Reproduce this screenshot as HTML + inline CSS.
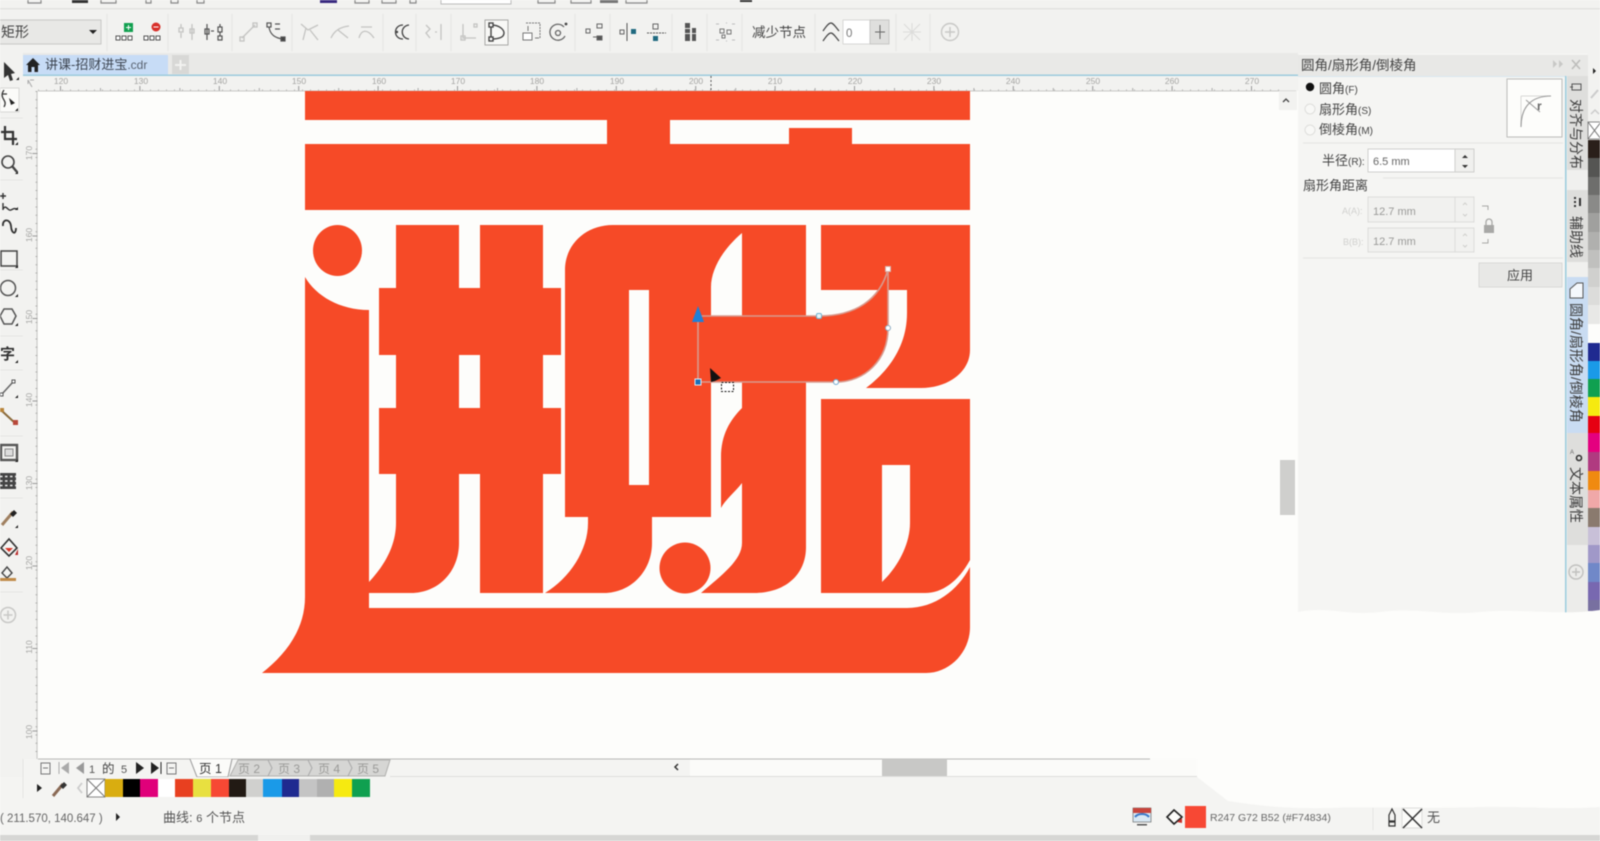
<!DOCTYPE html>
<html lang="zh">
<head>
<meta charset="utf-8">
<title>讲课-招财进宝.cdr</title>
<style>
html,body{margin:0;padding:0;width:1600px;height:841px;overflow:hidden;background:#fdfdfb}
svg{display:block;position:absolute;left:0;top:0;filter:blur(.5px)}
text{font-family:"Liberation Sans","Noto Sans CJK SC",sans-serif}
.ic{fill:none;stroke:#555;stroke-width:1.2}
.gr{fill:none;stroke:#c4c4c2;stroke-width:1.3}
.rl{font-size:8.5px;fill:#a4a4a2;text-anchor:middle}
</style>
</head>
<body>
<svg width="1600" height="841" viewBox="0 0 1600 841" xmlns="http://www.w3.org/2000/svg">
<!-- base -->
<rect width="1600" height="841" fill="#fdfdfb"/>
<!-- top toolbar row -->
<rect width="1600" height="53" fill="#f2f2f0"/>
<rect y="8" width="1600" height="1.5" fill="#e2e2e0"/>
<g fill="none" stroke="#888" stroke-width="1.2">
<path d="M28,0V3H41V0M101,0V3H116V0M146,0V3H151V0M171,0V3H178V0M197,0V3H204V0M355,0V3H369V0M382,0V3H396V0M410,0V3H416V0M538,0V3H555V0M571,0V3H591V0M626,0V3H647V0"/>
</g>
<rect x="72" y="0" width="16" height="3" fill="#333"/>
<rect x="320" y="0" width="17" height="3" fill="#3a2a80"/>
<rect x="600" y="0" width="18" height="3" fill="#777"/>
<rect x="740" y="0" width="12" height="2" fill="#333"/>
<rect x="441" y="-1" width="70" height="5" fill="#fff" stroke="#bbb"/>
<!-- property bar separators -->
<g stroke="#e6e6e4" stroke-width="1.2">
<path d="M107,14V51M168,14V51M232,14V51M292,14V51M383,14V51M416,14V51M451,14V51M575,14V51M610,14V51M672,14V51M707,14V51M742,14V51M815,14V51M896,14V51M930,14V51"/>
</g>
<!-- dropdown -->
<rect x="-2" y="20" width="103" height="24" fill="#e8e8e6" stroke="#c8c8c6"/>
<text x="1" y="37" font-size="14" fill="#444">矩形</text>
<path d="M89,30h8l-4,4z" fill="#222"/>
<!-- add / delete nodes -->
<rect x="124" y="23" width="9" height="9" fill="#12a050"/><path d="M126,27.5h5M128.5,25v5" stroke="#fff"/>
<circle cx="156" cy="27" r="4.5" fill="#d8302a"/><path d="M153.5,27h5" stroke="#fff"/>
<g fill="#fff" stroke="#555" stroke-width="1"><rect x="116" y="36" width="4" height="4"/><rect x="122" y="36" width="4" height="4"/><rect x="128" y="36" width="4" height="4"/><rect x="144" y="36" width="4" height="4"/><rect x="150" y="36" width="4" height="4"/><rect x="156" y="36" width="4" height="4"/></g>
<!-- gray and dark node icons -->
<g class="gr"><path d="M181,24v4M181,33v5M192,24v16"/><rect x="179" y="28" width="4" height="4"/><rect x="190" y="29" width="4" height="4"/></g>
<g class="ic"><path d="M207,24v16M220,24v3M220,32v4"/><rect x="205" y="29" width="4" height="5"/><rect x="218" y="27" width="4" height="5"/><rect x="218" y="36" width="4" height="4"/><path d="M211,31h3"/></g>
<g class="gr"><path d="M242,38L255,25"/><rect x="240" y="37" width="4" height="4"/><rect x="253" y="23" width="4" height="4"/></g>
<g class="ic"><path d="M269,27C270,34 274,38 283,39M275,24h5M275,29h5"/><rect x="267" y="23" width="4" height="4"/><rect x="281" y="37" width="4" height="4" fill="#444"/></g>
<g class="gr" stroke-width="1.500"><path d="M301,24L308,30L318,25M306,28L303,40M310,30L318,40M331,38C334,31 340,27 349,26M338,30L348,38M359,38C361,30 367,28 374,38M361,27L372,27"/></g>
<g fill="none" stroke="#444" stroke-width="1.300"><path d="M403,25C393,25 393,39 403,39M409,25C400,26 400,38 409,39"/></g><circle cx="397" cy="32" r="1.200" fill="#444"/>
<g class="gr"><path d="M426,25l4,4l-4,4l4,5M441,24v16M435,32h2"/></g>
<g class="gr"><path d="M463,24v14h13"/><rect x="461" y="36" width="4" height="4"/><rect x="474" y="24" width="3" height="3"/></g>
<rect x="485" y="20" width="23" height="25" fill="#f8f8f6" stroke="#a8a8a6"/>
<g fill="none" stroke="#444" stroke-width="1.400"><path d="M491,25C500,25 504,30 504,33C504,37 499,39 491,39V25Z"/><rect x="489" y="23" width="4" height="4" fill="#fff"/><rect x="489" y="37" width="4" height="4" fill="#fff"/></g>
<!-- second half icons -->
<g fill="none" stroke="#777" stroke-width="1"><path d="M526,23h14v16" stroke-dasharray="2 1"/><path d="M528,26v5"/><rect x="523" y="33" width="9" height="7" fill="#fff"/><path d="M535,38h4"/></g>
<g fill="none" stroke="#666" stroke-width="1.300"><path d="M564,27A8,8 0 1,0 565,36"/><circle cx="558" cy="33" r="2.500"/></g><circle cx="566" cy="24" r="1.400" fill="#444"/>
<g fill="none" stroke="#666" stroke-width="1"><rect x="586" y="29" width="4" height="4"/><rect x="597" y="24" width="5" height="4"/><rect x="597" y="36" width="5" height="4" fill="#555"/><path d="M593,37h4"/></g>
<g><path d="M627,23V41" stroke="#555"/><rect x="620" y="30" width="4" height="4" fill="none" stroke="#666"/><rect x="631" y="29" width="5" height="5" fill="#206a80"/><path d="M647,33H666" stroke="#555" stroke-dasharray="2 1"/><rect x="653" y="24" width="5" height="5" fill="none" stroke="#666"/><rect x="653" y="36" width="5" height="5" fill="#206a80"/></g>
<g fill="#555"><rect x="685" y="23" width="5" height="18"/><rect x="692" y="28" width="4" height="13"/></g><g fill="#e5e5e3"><rect x="685" y="28" width="5" height="1"/><rect x="685" y="33" width="5" height="1"/><rect x="692" y="33" width="4" height="1"/></g>
<g fill="none" stroke="#777"><rect x="720" y="29" width="4" height="4"/><rect x="727" y="30" width="4" height="4"/><rect x="722" y="35" width="3" height="3"/></g>
<path d="M716,24h3M732,24h3M716,40h3M732,40h3M726,23h1M726,41h1" stroke="#bbb"/>
<text x="752" y="37" font-size="13.500" fill="#444">减少节点</text>
<path d="M823,31C827,25 829,23 831,23C833,23 835,26 839,31M823,41C827,35 829,33 831,33C833,33 835,36 839,41" fill="none" stroke="#444" stroke-width="1.200"/>
<rect x="843" y="20" width="27" height="24" fill="#fff" stroke="#d8d8d6"/>
<text x="846" y="37" font-size="11.500" fill="#777">0</text>
<rect x="870" y="20" width="19" height="24" fill="#dfdfdd" stroke="#c8c8c6"/>
<path d="M880,25V39M875,32H885" stroke="#666"/>
<g fill="none" stroke="#dcdcda" stroke-width="1.100"><path d="M904,24L920,40M920,24L904,40M912,23V41M903,32H921"/></g>
<circle cx="950" cy="32" r="8.500" fill="none" stroke="#c8c8c6" stroke-width="1.400"/><path d="M945,32h10M950,27v10" stroke="#c8c8c6" stroke-width="1.400"/>

<!-- tab bar -->
<rect y="53" width="1298" height="22" fill="#e9e9e7"/>
<rect x="23" y="55" width="145" height="20" fill="#c7dcf6"/>
<path d="M26,65L33,58L40,65H38V72H34.500V67H31.500V72H28V65Z" fill="#222"/>
<text x="45" y="69" font-size="13" fill="#3c4450">讲课-招财进宝<tspan font-size="12" fill="#5a6472">.cdr</tspan></text>
<rect x="172" y="55" width="17" height="19" fill="#d8d8d6"/><path d="M175,65h11M180.500,60v10" stroke="#f2f2f0" stroke-width="2"/>
<rect y="74.500" width="1298" height="1.600" fill="#9ccbdc"/>

<!-- rulers -->
<rect x="23" y="76" width="1275" height="15" fill="#f2f2f0"/>
<rect x="23" y="76" width="15" height="722" fill="#f2f2f0"/>
<path d="M38,90.300H1280" stroke="#b4b4b2" stroke-width="1.600" stroke-dasharray="1 7"/>
<path d="M60,88.500H1280" stroke="#999" stroke-width="5" stroke-dasharray="1 78.400"/>
<path d="M100,89.500H1280" stroke="#aaa" stroke-width="3" stroke-dasharray="1 78.400"/>
<path d="M37,91V759" stroke="#c8c8c6"/>
<path d="M36.500,91V759" stroke="#b0b0ae" stroke-width="2" stroke-dasharray="1 7.250"/>
<path d="M35,153V759" stroke="#999" stroke-width="5" stroke-dasharray="1 81.500"/>
<path d="M38,91H1296" stroke="#c8c8c6"/>
<path d="M30,80h4M28,80l4,7M28,80v4" stroke="#aaa" fill="none"/>
<g class="rl">
<text x="61" y="84">120</text><text x="141" y="84">130</text><text x="220" y="84">140</text><text x="299" y="84">150</text><text x="379" y="84">160</text><text x="458" y="84">170</text><text x="537" y="84">180</text><text x="617" y="84">190</text><text x="696" y="84">200</text><text x="775" y="84">210</text><text x="855" y="84">220</text><text x="934" y="84">230</text><text x="1013" y="84">240</text><text x="1093" y="84">250</text><text x="1172" y="84">260</text><text x="1252" y="84">270</text>
<text transform="translate(32,153) rotate(-90)">170</text><text transform="translate(32,235) rotate(-90)">160</text><text transform="translate(32,317) rotate(-90)">150</text><text transform="translate(32,400) rotate(-90)">140</text><text transform="translate(32,483) rotate(-90)">130</text><text transform="translate(32,563) rotate(-90)">120</text><text transform="translate(32,647) rotate(-90)">110</text><text transform="translate(32,732) rotate(-90)">100</text>
</g>
<path d="M711,76V91" stroke="#555" stroke-dasharray="2 2"/>

<!-- artwork -->
<g fill="#f64a27" fill-rule="evenodd">
<rect x="305" y="91" width="665" height="29"/>
<rect x="305" y="144" width="665" height="66"/>
<rect x="607" y="120" width="63" height="24"/>
<rect x="789" y="128" width="63" height="16"/>
<ellipse cx="337.500" cy="250.500" rx="24.500" ry="25.500"/>
<path d="M305,277C316,296 340,310 369,310L369,608L907,608C935,608 958,590 970,567L970,627C970,652 950,673 926,673L262,673C285,655 305,630 305,597Z"/>
<path d="M396,225H459V288H480V225H543V288H561V355H543V408H561V474H543V593H480V474H459V543C459,572 438,593 411,593H369V582C385,565 396,545 396,523V474H379V408H396V355H379V288H396ZM459,355H480V408H459Z"/>
<path d="M565,517V270C565,245 585,225 613,225H806V547C806,575 785,593 754,593H701C722,575 742,560 742,543V483C735,492 725,500 721,508L721,457C721,435 730,420 742,408V233C722,250 711,270 711,287V517H652V543C652,572 630,593 604,593H545C570,578 588,550 588,523V517ZM629,290H649V485H629Z"/>
<ellipse cx="685" cy="568" rx="25.500" ry="25.500"/>
<path d="M821,225H970V350C970,372 948,388 921,388H866C890,370 907,345 907,313V290H821Z"/>
<path d="M821,399H970V560C958,582 942,593 925,593H821ZM882,465H910V523C910,545 897,568 882,582Z"/>
</g>
<!-- selected shape -->
<path d="M698,316H819C855,316 880,300 888,269V328C888,360 865,382 836,382H698Z" fill="#f64a27" stroke="#d89a8e" stroke-width="1.600"/>
<path d="M698,306L704,322H692Z" fill="#1f80d8"/>
<rect x="695" y="379" width="6" height="6" fill="#1b6fb8" stroke="#dcecf8"/>
<rect x="816.500" y="313.500" width="5" height="5" rx="1.500" fill="#eaf4f8" stroke="#6fb4d0"/>
<rect x="885.500" y="266.500" width="5" height="5" fill="#fff" stroke="#d8b0a8"/>
<circle cx="888" cy="328" r="2.500" fill="#fff" stroke="#8aa8c0"/>
<circle cx="836" cy="382" r="2.500" fill="#fff" stroke="#6fa8d0"/>
<path d="M710,368L721,378L715,381L711,382Z" fill="#111"/>
<rect x="721.500" y="382.500" width="12" height="9" fill="#fff" stroke="#111" stroke-dasharray="2 1.500"/>

<!-- vertical scrollbar -->
<rect x="1279" y="91" width="18" height="19" fill="#f2f2f0"/>
<path d="M1283,102l3,-3l3,3" fill="none" stroke="#444" stroke-width="1.300"/>
<rect x="1280" y="460" width="15" height="55" fill="#cfcfcd"/>

<!-- left toolbar -->
<rect x="0" y="53" width="23" height="745" fill="#f2f2f0"/>
<path d="M0,118H23M0,180H23M0,270H23M0,336H23M0,370H23M0,436H23M0,498H23M0,592H23" stroke="#e6e6e4"/>
<path d="M4,62L15,73L11,74L13,80L10,81L8,75L4,78Z" fill="#333"/>
<path d="M16,80h3v-3z" fill="#222"/>
<rect x="0" y="88" width="19" height="24" fill="#fbfbf9" stroke="#d8d8d6"/>
<path d="M4,90c-3,4 -2,7 0,10c2,3 1,5 0,7M2,94h5" fill="none" stroke="#333" stroke-width="1.300"/><path d="M9,98l6,5l-4,2z" fill="#222"/><path d="M15,111h3v-3z" fill="#222"/>
<path d="M5,126V139H17M1,132H13V145" fill="none" stroke="#333" stroke-width="2.200"/><path d="M15,145h3v-3z" fill="#222"/>
<circle cx="8" cy="162" r="6" fill="none" stroke="#444" stroke-width="1.600"/><path d="M12,166L17,172" stroke="#444" stroke-width="2.400"/><path d="M15,174h3v-3z" fill="#222"/>
<path d="M3,193v6M0,196h6M3,203v7M3,209c2,-3 3,-2 5,0s3,1 5,0s2,0 4,0" fill="none" stroke="#333" stroke-width="1.400"/><path d="M15,210h3v-3z" fill="#222"/>
<path d="M3,226C2,219 10,218 11,226C11.500,234 16,235 16,228" fill="none" stroke="#333" stroke-width="1.800"/>
<rect x="1" y="251" width="16" height="15" fill="none" stroke="#444" stroke-width="1.500"/><path d="M15,268h3v-3z" fill="#222"/>
<circle cx="8" cy="288" r="7.500" fill="none" stroke="#555" stroke-width="1.500"/><path d="M15,297h3v-3z" fill="#222"/>
<path d="M4,309H12L16,316L12,324H4L0,316Z" fill="none" stroke="#555" stroke-width="1.500"/><path d="M15,326h3v-3z" fill="#222"/>
<text x="0" y="359" font-size="15" font-weight="700" fill="#333">字</text><path d="M15,363h3v-3z" fill="#222"/>
<path d="M2,394L13,382" stroke="#666" stroke-width="1.500"/><rect x="0" y="393" width="3" height="3" fill="#fff" stroke="#555"/><rect x="12" y="380" width="3" height="3" fill="#fff" stroke="#555"/><path d="M15,398h3v-3z" fill="#222"/>
<path d="M2,411L15,423" stroke="#8a6a3a" stroke-width="2"/><rect x="0" y="408" width="4" height="4" fill="#b8843a"/><rect x="13" y="420" width="5" height="5" fill="#b8483a"/>
<rect x="1" y="445" width="16" height="15" fill="none" stroke="#555" stroke-width="2.400"/><rect x="5" y="449" width="8" height="7" fill="#ddd" stroke="#888"/><path d="M15,462h3v-3z" fill="#222"/>
<rect x="0" y="473" width="16" height="16" fill="#444"/><path d="M0,476.500H16M0,481H16M0,485.500H16" stroke="#eee" stroke-width="1.500" stroke-dasharray="2.500 2.500"/>
<path d="M2,525L13,512" stroke="#a08060" stroke-width="3"/><path d="M10,514L14,510L17,513L13,517Z" fill="#222"/><path d="M15,528h3v-3z" fill="#222"/>
<path d="M1,548L9,539L17,548L9,556Z" fill="#f4f4f2" stroke="#333" stroke-width="1.600"/><path d="M5,548L13,548L9,552Z" fill="#d8362a"/><path d="M15,555h3v-6z" fill="#b82a2a"/>
<path d="M2,573L7,567L12,573L7,578Z" fill="#f4f4f2" stroke="#444" stroke-width="1.400"/><rect x="0" y="578" width="16" height="3" fill="#c08a48"/>
<circle cx="8" cy="615" r="7.500" fill="none" stroke="#c8c8c6" stroke-width="1.500"/><path d="M3.500,615h9M8,610.500v9" stroke="#c8c8c6" stroke-width="1.500"/>

<!-- page tabs + horizontal scrollbar -->
<rect x="23" y="759" width="667" height="18" fill="#f4f4f2"/>
<rect x="690" y="759" width="510" height="18" fill="#fbfbf9"/>
<path d="M38,759H1150" stroke="#b8b8b6"/>
<path d="M390,776.500H1197" stroke="#dededc"/>
<path d="M230,776L238,760H390L385,776Z" fill="#d6d6d4" stroke="#b0b0ae"/>
<path d="M268,760L272,768L268,776M308,760L312,768L308,776M348,760L352,768L348,776" fill="none" stroke="#aaa"/>
<path d="M190,759L197,777H228L232,759" fill="#fbfbf9" stroke="#999"/>
<text x="199" y="773" font-size="12.500" fill="#333">页 1</text>
<g font-size="12" fill="#9a9a98"><text x="238" y="773">页 2</text><text x="278" y="773">页 3</text><text x="318" y="773">页 4</text><text x="357" y="773">页 5</text></g>
<rect x="41" y="763" width="9" height="11" fill="none" stroke="#777"/><path d="M43,768h5" stroke="#777"/>
<path d="M59,762V774" stroke="#aaa"/><path d="M69,762L61,768L69,774Z" fill="#aaa"/><path d="M84,762L76,768L84,774Z" fill="#999"/>
<text x="89" y="773" font-size="11" fill="#555">1</text><text x="102" y="773" font-size="12.500" fill="#444">的</text><text x="121" y="773" font-size="11" fill="#555">5</text>
<path d="M136,762L144,768L136,774Z" fill="#222"/><path d="M151,762L159,768L151,774Z" fill="#222"/><path d="M161,762V774" stroke="#222"/>
<rect x="167" y="763" width="9" height="11" fill="none" stroke="#777"/><path d="M169,768h5" stroke="#777"/>
<path d="M678,764l-3,3l3,3" fill="none" stroke="#333" stroke-width="1.500"/>
<rect x="882" y="759" width="65" height="17" fill="#c8c8c6"/>

<!-- palette row -->
<rect x="0" y="777" width="1240" height="21" fill="#f4f4f2"/>
<path d="M23,759V798" stroke="#e4e4e2"/>
<path d="M37,784L42,788L37,792Z" fill="#222"/>
<path d="M53,796L63,784" stroke="#8a6a55" stroke-width="3"/><path d="M60,786L64,782L67,785L63,789Z" fill="#333"/>
<path d="M82,783l-4,5l4,5" fill="none" stroke="#ccc" stroke-width="1.800"/>
<rect x="87" y="779" width="18" height="18" fill="#fff" stroke="#888"/><path d="M87,779L105,797M105,779L87,797" stroke="#777"/>
<rect x="105" y="779" width="18" height="18" fill="#d9ad10"/>
<rect x="123" y="779" width="17" height="18" fill="#000"/>
<rect x="140" y="779" width="18" height="18" fill="#e0007a"/>
<rect x="158" y="779" width="17" height="18" fill="#fff"/>
<rect x="175" y="779" width="18" height="18" fill="#e84020"/>
<rect x="193" y="779" width="18" height="18" fill="#e8e040"/>
<rect x="211" y="779" width="18" height="18" fill="#f74834"/>
<rect x="229" y="779" width="17" height="18" fill="#221a14"/>
<rect x="246" y="779" width="17" height="18" fill="#d0d0ce"/>
<rect x="263" y="779" width="19" height="18" fill="#1a9ae8"/>
<rect x="282" y="779" width="17" height="18" fill="#1f2a90"/>
<rect x="299" y="779" width="18" height="18" fill="#c4c4c4"/>
<rect x="317" y="779" width="17" height="18" fill="#b0b0b0"/>
<rect x="334" y="779" width="18" height="18" fill="#f6ea10"/>
<rect x="352" y="779" width="18" height="18" fill="#10a050"/>

<!-- right panel -->
<rect x="1298" y="53" width="267" height="560" fill="#f5f5f3"/>
<rect x="1298" y="55" width="302" height="21" fill="#e8e8e6"/>
<rect x="1298" y="53" width="302" height="2" fill="#f4f4f2"/>
<text x="1301" y="70" font-size="13.500" fill="#444">圆角/扇形角/倒棱角</text>
<path d="M1553,60l4,4l-4,4zM1559,60l4,4l-4,4z" fill="#c8c8c6"/>
<path d="M1572,60l8,9M1580,60l-8,9" stroke="#bdbdbb" stroke-width="1.600"/>
<rect x="1298" y="76" width="267" height="1" fill="#d8e6ee"/>
<circle cx="1310" cy="87" r="4.200" fill="#111"/>
<circle cx="1310" cy="109" r="5" fill="#f8f8f6" stroke="#dededc"/>
<circle cx="1310" cy="130" r="5" fill="#f8f8f6" stroke="#dededc"/>
<text x="1319" y="93" font-size="13" fill="#444">圆角<tspan font-size="10">(F)</tspan></text>
<text x="1319" y="114" font-size="13" fill="#444">扇形角<tspan font-size="10">(S)</tspan></text>
<text x="1319" y="134" font-size="13" fill="#444">倒棱角<tspan font-size="10">(M)</tspan></text>
<rect x="1507" y="79" width="55" height="58" fill="#fdfdfb" stroke="#bcbcba"/>
<path d="M1521,96H1551M1521,96V127" stroke="#d8d8d6"/>
<path d="M1521,127C1521,106 1532,96 1551,96" fill="none" stroke="#999" stroke-width="1.100"/>
<path d="M1526,100L1540,112" stroke="#999"/>
<text x="1537" y="110" font-size="12" font-weight="700" fill="#666">r</text>
<path d="M1303,143H1563M1303,258H1563" stroke="#e4e4e2"/>
<path d="M1383,178H1563" stroke="#e4e4e2"/>
<text x="1322" y="165" font-size="13" fill="#444">半径<tspan font-size="10">(R):</tspan></text>
<rect x="1368" y="149" width="87" height="23" fill="#fff" stroke="#cfcfcd"/>
<rect x="1455" y="149" width="19" height="23" fill="#f0f0ee" stroke="#cfcfcd"/>
<path d="M1462,158l3,-3l3,3zM1462,165l3,3l3,-3z" fill="#333"/>
<text x="1373" y="165" font-size="11" fill="#666">6.5 mm</text>
<text x="1303" y="190" font-size="13" fill="#444">扇形角距离</text>
<text x="1342" y="214" font-size="9" fill="#d0d0ce">A(A):</text>
<text x="1343" y="245" font-size="9" fill="#d0d0ce">B(B):</text>
<rect x="1368" y="197" width="87" height="25" fill="#f1f1ef" stroke="#dcdcda"/>
<rect x="1455" y="197" width="19" height="25" fill="#f1f1ef" stroke="#dcdcda"/>
<rect x="1368" y="228" width="87" height="24" fill="#f1f1ef" stroke="#dcdcda"/>
<rect x="1455" y="228" width="19" height="24" fill="#f1f1ef" stroke="#dcdcda"/>
<text x="1373" y="215" font-size="11" fill="#9a9a98">12.7 mm</text>
<text x="1373" y="245" font-size="11" fill="#9a9a98">12.7 mm</text>
<path d="M1463,205l2,-2l2,2M1463,214l2,2l2,-2M1463,236l2,-2l2,2M1463,245l2,2l2,-2" fill="none" stroke="#cfcfcd"/>
<path d="M1482,206h6v4M1482,243h6v-4" fill="none" stroke="#a8a8a6"/>
<rect x="1484" y="225" width="10" height="8" fill="#a8a8a6"/><path d="M1486,225v-3a3,3 0 0 1 6,0v3" fill="none" stroke="#a8a8a6" stroke-width="1.300"/>
<rect x="1479" y="263" width="83" height="24" fill="#e8e8e6" stroke="#d8d8d6"/>
<text x="1507" y="280" font-size="13" fill="#444">应用</text>

<!-- vertical tabs -->
<rect x="1565" y="76" width="1.600" height="537" fill="#9ccbdc"/>
<rect x="1567" y="76" width="21" height="537" fill="#dededc"/>
<rect x="1567" y="170" width="21" height="20" fill="#f0f0ee"/>
<rect x="1567" y="262" width="21" height="15" fill="#f0f0ee"/>
<rect x="1567" y="277" width="21" height="156" fill="#c9dcf2"/>
<rect x="1567" y="545" width="21" height="68" fill="#ececea"/>
<g fill="#3c3c3c" font-size="14">
<text transform="translate(1571,99) rotate(90)">对齐与分布</text>
<text transform="translate(1571,216) rotate(90)">辅助线</text>
<text transform="translate(1571,303) rotate(90)">圆角/扇形角/倒棱角</text>
<text transform="translate(1571,467) rotate(90)">文本属性</text>
</g>
<rect x="1572" y="84" width="9" height="6" fill="none" stroke="#555"/><path d="M1570,87h3" stroke="#555"/>
<path d="M1575,197v2M1575,201v2M1575,205v2M1580,198v8" stroke="#333" stroke-width="2"/>
<path d="M1570,298V289L1577,283H1583V298Z" fill="#f4f8fc" stroke="#555"/>
<circle cx="1579" cy="458" r="2.500" fill="none" stroke="#333" stroke-width="1.600"/><text x="1570" y="454" font-size="6" fill="#666">A</text>
<circle cx="1576" cy="572" r="7" fill="none" stroke="#c0c0be" stroke-width="1.400"/><path d="M1572,572h8M1576,568v8" stroke="#c0c0be" stroke-width="1.400"/>

<!-- right palette -->
<rect x="1588" y="53" width="12" height="558" fill="#f2f2f0"/>
<path d="M1593,68l3,3l-3,3z" fill="#222"/>
<path d="M1591,98l7,-8" stroke="#ccc" stroke-width="2"/><path d="M1591,114l4,-4l4,4" fill="none" stroke="#ccc" stroke-width="1.500"/>
<rect x="1588" y="122" width="13" height="17" fill="#fff" stroke="#888"/><path d="M1588,122L1601,139M1601,122L1588,139" stroke="#777"/>
<rect x="1588" y="140" width="12" height="18" fill="#2a1f1a"/>
<rect x="1588" y="158" width="12" height="19" fill="#555553"/>
<rect x="1588" y="177" width="12" height="18" fill="#6e6e6c"/>
<rect x="1588" y="195" width="12" height="18" fill="#8a8a88"/>
<rect x="1588" y="213" width="12" height="19" fill="#a0a09e"/>
<rect x="1588" y="232" width="12" height="18" fill="#b0b0ae"/>
<rect x="1588" y="250" width="12" height="18" fill="#c0c0be"/>
<rect x="1588" y="268" width="12" height="19" fill="#d0d0ce"/>
<rect x="1588" y="287" width="12" height="18" fill="#dcdcda"/>
<rect x="1588" y="305" width="12" height="19" fill="#e8e8e6"/>
<rect x="1588" y="324" width="12" height="19" fill="#fdfdfb"/>
<rect x="1588" y="343" width="12" height="18" fill="#1f2a90"/>
<rect x="1588" y="361" width="12" height="18" fill="#1a9ae8"/>
<rect x="1588" y="379" width="12" height="18" fill="#10a050"/>
<rect x="1588" y="397" width="12" height="19" fill="#f6ea10"/>
<rect x="1588" y="416" width="12" height="17" fill="#e60012"/>
<rect x="1588" y="433" width="12" height="19" fill="#e4007f"/>
<rect x="1588" y="452" width="12" height="19" fill="#b03a80"/>
<rect x="1588" y="471" width="12" height="19" fill="#f08a10"/>
<rect x="1588" y="490" width="12" height="18" fill="#f0a8a8"/>
<rect x="1588" y="508" width="12" height="19" fill="#8a7a6e"/>
<rect x="1588" y="527" width="12" height="18" fill="#c8c0d8"/>
<rect x="1588" y="545" width="12" height="18" fill="#a098c8"/>
<rect x="1588" y="563" width="12" height="19" fill="#7088c8"/>
<rect x="1588" y="582" width="12" height="18" fill="#7868b0"/>
<rect x="1588" y="600" width="12" height="11" fill="#7870a0"/>

<!-- status bar -->
<rect x="0" y="798" width="1600" height="37" fill="#f4f4f2"/>
<rect x="0" y="835" width="1600" height="6" fill="#d6d6d4"/>
<rect x="258" y="835" width="52" height="6" fill="#f0f0ee"/>
<text x="0" y="822" font-size="11.500" fill="#666">( 211.570, 140.647 )</text>
<path d="M116,813l4,4l-4,4z" fill="#222"/>
<text x="163" y="822" font-size="13" fill="#555">曲线: <tspan font-size="11">6</tspan> 个节点</text>

<!-- torn-away white area on right -->
<path d="M1298,612C1330,606 1345,616 1380,612C1420,607 1440,616 1480,612C1520,608 1560,616 1600,610V807C1560,810 1520,806 1480,807C1420,809 1380,806 1330,808C1290,809 1260,806 1228,801L1197,777L1197,759H1298Z" fill="#fdfdfb"/>

<!-- status right -->
<rect x="1133" y="808" width="18" height="14" fill="#d8e8f4" stroke="#555" stroke-width=".6"/>
<rect x="1133" y="808" width="18" height="5" fill="#c8443c"/><path d="M1135,817c3,-4 11,-4 14,0" fill="none" stroke="#3a78c8" stroke-width="2"/><rect x="1137" y="824" width="10" height="1.500" fill="#555"/>
<path d="M1167,817L1174,810L1182,817L1174,824Z" fill="#fbfbf9" stroke="#222" stroke-width="1.600"/><path d="M1177,822l5,-4v5z" fill="#c8302a"/>
<rect x="1185" y="806" width="21" height="22" fill="#f74834"/>
<text x="1210" y="821" font-size="10.500" fill="#666">R247 G72 B52 (#F74834)</text>
<path d="M1373,808V830" stroke="#e4e4e2"/>
<path d="M1392,809L1395,815V821H1389V815ZM1389,822H1395V826H1389Z" fill="none" stroke="#333" stroke-width="1.200"/>
<rect x="1402" y="808" width="20" height="20" fill="#fbfbf9" stroke="#dcdcda"/>
<path d="M1403,828L1422,809M1403,809L1422,828" stroke="#333" stroke-width="1.500"/>
<text x="1427" y="822" font-size="13" fill="#555">无</text>
</svg>
</body>
</html>
